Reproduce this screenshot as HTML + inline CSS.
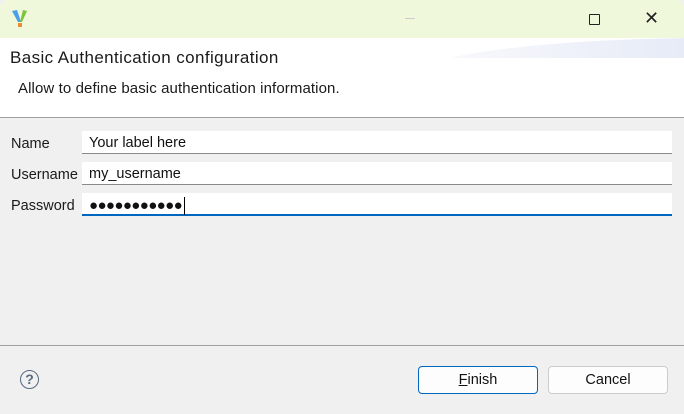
<!DOCTYPE html>
<html><head><style>
body{margin:0;width:684px;height:414px;overflow:hidden;font-family:"Liberation Sans",sans-serif;background:#f0f0f0;position:relative}
.a{position:absolute}
.t{font-size:14px;color:#1a1a1a}
.f{position:absolute;left:82px;width:590px;height:23px;background:#fff;border-bottom:1px solid #8a8a8a;font-size:14.5px;line-height:25px;padding-left:7px;box-sizing:border-box;color:#111}
.b{position:absolute;top:366px;height:28px;border:1px solid #ccc;border-radius:4px;background:#fdfdfd;box-sizing:border-box;font-size:14.5px;text-align:center;line-height:27px;color:#111}
</style></head><body>
<div class="a" style="left:0;top:0;width:684px;height:38px;background:#f0f8dc;border-radius:8px 8px 0 0"></div>
<svg class="a" style="left:10px;top:8px" width="20" height="22"><path d="M2 3 L8 14 L11 14 L7 2Z" fill="#4a9fe8"/><path d="M17 3 L12 14 L10 14 L13 2Z" fill="#7cc43a"/><rect x="8" y="15" width="4" height="4" fill="#f08a30"/></svg>
<div class="a" style="left:405px;top:18px;width:10px;height:1px;background:#ccc"></div>
<div class="a" style="left:589px;top:14px;width:9px;height:9px;border:1.3px solid #222;border-radius:1px"></div>
<div class="a" style="left:644px;top:8px;font-size:18px;color:#222">✕</div>
<div class="a" style="left:0;top:38px;width:684px;height:79px;background:#fff;overflow:hidden"><div class="a" style="left:410px;top:0;width:600px;height:80px;border-radius:50%;background:linear-gradient(90deg,#fafbfd,#d0d8f0);clip-path:inset(0 0 60px 0)"></div><div class="a" style="left:400px;top:20px;width:300px;height:60px;background:#fff;border-radius:50% 0 0 0"></div></div>
<div class="a t" style="left:10px;top:48px;font-size:17px;letter-spacing:0.4px">Basic Authentication configuration</div>
<div class="a t" style="left:18px;top:80px;font-size:15px;letter-spacing:0.1px">Allow to define basic authentication information.</div>
<div class="a" style="left:0;top:117px;width:684px;height:1px;background:#a0a0a0"></div>
<div class="a t" style="left:11px;top:136px;font-size:14.5px">Name</div>
<div class="a t" style="left:11px;top:167px;font-size:14.5px">Username</div>
<div class="a t" style="left:11px;top:198px;font-size:14.5px">Password</div>
<div class="f" style="top:131px">Your label here</div>
<div class="f" style="top:162px">my_username</div>
<div class="f" style="top:193px;border-bottom:2px solid #0067c0;font-size:15px;letter-spacing:-0.6px">●●●●●●●●●●●<span style="display:inline-block;width:1px;height:18px;background:#000;vertical-align:middle;margin-left:2px"></span></div>
<div class="a" style="left:0;top:345px;width:684px;height:1px;background:#a0a0a0"></div>
<div class="a" style="left:20px;top:370px;width:17px;height:17px;border:1.5px solid #5a6a80;border-radius:50%;font-size:14px;font-weight:bold;color:#5a6a80;text-align:center;line-height:17px">?</div>
<div class="b" style="left:418px;width:120px;border-color:#0067c0"><u>F</u>inish</div>
<div class="b" style="left:548px;width:120px">Cancel</div>
</body></html>
